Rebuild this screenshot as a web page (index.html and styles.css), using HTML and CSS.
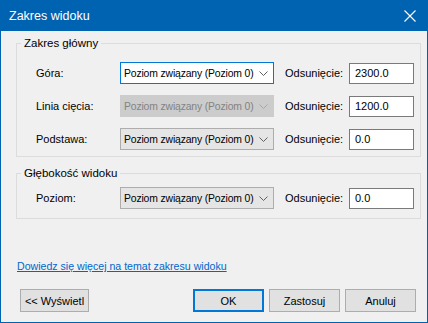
FILE: index.html
```html
<!DOCTYPE html>
<html lang="pl">

<head>
    <meta charset="UTF-8" />
    <meta name="viewport" content="width=device-width, initial-scale=1.0" />
    <title>Zakres widoku</title>
    <link rel="stylesheet" href="styles.css">
</head>

<body>
    <div class="window">
        <div class="titlebar">
            <span class="title">Zakres widoku</span>
            <svg class="close" width="12" height="12" viewBox="0 0 12 12">
                <path d="M0.5 0.5 L11.5 11.5 M11.5 0.5 L0.5 11.5" stroke="#fff" stroke-width="1.1" fill="none" />
            </svg>
        </div>

        <div class="content">
            <fieldset class="group">
                <legend>Zakres główny</legend>
                <div class="rows">
                    <div class="row">
                        <span class="label">Góra:</span>
                        <div class="combo focused">
                            <span class="combo-text">Poziom związany (Poziom 0)</span>
                            <svg class="chevron" width="9" height="5" viewBox="0 0 9 5"><polyline points="0.5,0.5 4.5,4.5 8.5,0.5" /></svg>
                        </div>
                        <span class="label offset">Odsunięcie:</span>
                        <div class="textbox">2300.0</div>
                    </div>
                    <div class="row">
                        <span class="label">Linia cięcia:</span>
                        <div class="combo disabled">
                            <span class="combo-text">Poziom związany (Poziom 0)</span>
                            <svg class="chevron" width="9" height="5" viewBox="0 0 9 5"><polyline points="0.5,0.5 4.5,4.5 8.5,0.5" /></svg>
                        </div>
                        <span class="label offset">Odsunięcie:</span>
                        <div class="textbox">1200.0</div>
                    </div>
                    <div class="row">
                        <span class="label">Podstawa:</span>
                        <div class="combo">
                            <span class="combo-text">Poziom związany (Poziom 0)</span>
                            <svg class="chevron" width="9" height="5" viewBox="0 0 9 5"><polyline points="0.5,0.5 4.5,4.5 8.5,0.5" /></svg>
                        </div>
                        <span class="label offset">Odsunięcie:</span>
                        <div class="textbox">0.0</div>
                    </div>
                </div>
            </fieldset>

            <fieldset class="group depth">
                <legend>Głębokość widoku</legend>
                <div class="rows">
                    <div class="row">
                        <span class="label">Poziom:</span>
                        <div class="combo">
                            <span class="combo-text">Poziom związany (Poziom 0)</span>
                            <svg class="chevron" width="9" height="5" viewBox="0 0 9 5"><polyline points="0.5,0.5 4.5,4.5 8.5,0.5" /></svg>
                        </div>
                        <span class="label offset">Odsunięcie:</span>
                        <div class="textbox">0.0</div>
                    </div>
                </div>
            </fieldset>

            <a class="help-link" href="#">Dowiedz się więcej na temat zakresu widoku</a>

            <div class="buttons">
                <button class="btn show">&lt;&lt; Wyświetl</button>
                <div class="spacer"></div>
                <button class="btn default">OK</button>
                <button class="btn">Zastosuj</button>
                <button class="btn">Anuluj</button>
            </div>
        </div>
    </div>
</body>

</html>
```

FILE: styles.css
```css
body {
    margin: 0;
    padding: 0;
    font-family: "Liberation Sans", Arial, sans-serif;
    font-size: 11px;
    color: #000;
}

.window {
    width: 428px;
    height: 323px;
    box-sizing: border-box;
    border: 1px solid #0063b1;
    border-top: none;
    background: #f0f0f0;
}

.titlebar {
    height: 31px;
    background: #0063b1;
    display: flex;
    align-items: center;
    justify-content: space-between;
    padding: 0 11px 0 8px;
    color: #fff;
}

.title {
    font-size: 12.5px;
}

.close {
    display: block;
}

.content {
    padding: 4px 6px 0 15px;
    display: flex;
    flex-direction: column;
}

/* group boxes */
.group {
    margin: 0;
    padding: 0;
    border: 1px solid #dcdcdc;
    min-inline-size: 0;
}

.group legend {
    margin-left: 4px;
    padding: 0 3px;
    line-height: 16px;
    font-size: 11.5px;
}

.rows {
    display: flex;
    flex-direction: column;
    gap: 11px;
    padding: 11px 0 6px 19px;
}

.group.depth {
    margin-top: 8px;
}

.group.depth .rows {
    padding-top: 6px;
    padding-bottom: 9px;
}

.row {
    display: flex;
    align-items: center;
    height: 22px;
}

.label {
    width: 84px;
    flex-shrink: 0;
}

.label.offset {
    width: 64px;
    margin-left: 11px;
}

/* combo boxes */
.combo {
    width: 154px;
    height: 22px;
    flex-shrink: 0;
    box-sizing: border-box;
    border: 1px solid #adadad;
    background: #e5e5e5;
    display: flex;
    align-items: center;
    padding: 0 5px 0 3px;
    white-space: nowrap;
}

.combo-text {
    flex: 1;
    overflow: hidden;
    font-size: 10.4px;
    letter-spacing: -0.15px;
}

.combo.focused {
    background: #fff;
    border-color: #0078d7;
}

.combo.disabled {
    background: #cccccc;
    border-color: #cccccc;
    color: #838383;
}

.chevron {
    flex-shrink: 0;
    display: block;
}

.chevron polyline {
    fill: none;
    stroke: #606060;
    stroke-width: 1;
}

.combo.disabled .chevron polyline {
    stroke: #a8a8a8;
}

.textbox {
    width: 65px;
    height: 21px;
    flex-shrink: 0;
    box-sizing: border-box;
    border: 1px solid #7a7a7a;
    background: #fff;
    padding: 0 5px;
    line-height: 19px;
}

.help-link {
    margin-top: 41px;
    margin-left: 1px;
    color: #0066cc;
    text-decoration: underline;
    font-size: 10.6px;
    line-height: 13px;
    align-self: flex-start;
}

/* bottom buttons */
.buttons {
    display: flex;
    margin-top: 16px;
    padding-left: 4px;
    padding-right: 5px;
    gap: 5px;
}

.spacer {
    flex: 1;
}

.btn {
    font-family: "Liberation Sans", Arial, sans-serif;
    font-size: 11px;
    height: 23px;
    width: 71px;
    box-sizing: border-box;
    border: 1px solid #adadad;
    background: #e1e1e1;
    color: #000;
    padding: 0;
    margin: 0;
}

.btn.show {
    width: 69px;
}

.btn.default {
    border: 2px solid #0078d7;
}
```
